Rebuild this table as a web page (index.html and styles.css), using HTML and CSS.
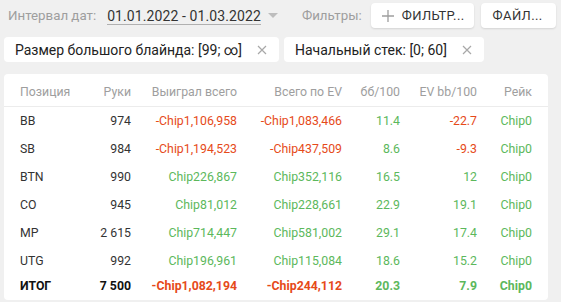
FILE: index.html
```html
<!DOCTYPE html>
<html lang="ru">
<head>
<meta charset="utf-8">
<link rel="stylesheet" href="styles.css">
</head>
<body>
<div class="page">
  <div class="topbar">
    <span class="label">Интервал дат:</span>
    <span class="date">01.01.2022 - 01.03.2022</span>
    <span class="caret"></span>
    <span class="label filters-label">Фильтры:</span>
    <button class="btn"><svg class="plus" width="14" height="14" viewBox="0 0 14 14"><path d="M7 1v12M1 7h12" stroke="#9e9e9e" stroke-width="1.3" fill="none"/></svg>ФИЛЬТР...</button>
    <button class="btn btn-file">ФАЙЛ...</button>
    <div class="edge"></div>
  </div>
  <div class="chips">
    <div class="chip">Размер большого блайнда: [99; ∞]<svg class="x" width="10" height="10" viewBox="0 0 10 10"><path d="M1 1l8 8M9 1l-8 8" stroke="#a8a8a8" stroke-width="1.2"/></svg></div>
    <div class="chip">Начальный стек: [0; 60]<svg class="x" width="10" height="10" viewBox="0 0 10 10"><path d="M1 1l8 8M9 1l-8 8" stroke="#a8a8a8" stroke-width="1.2"/></svg></div>
  </div>
  <div class="card">
    <div class="row head">
      <div class="l">Позиция</div><div>Руки</div><div>Выиграл всего</div><div>Всего по EV</div><div>бб/100</div><div>EV bb/100</div><div>Рейк</div>
    </div>
    <div class="row">
      <div class="l">BB</div><div>974</div><div class="neg">-Chip1,106,958</div><div class="neg">-Chip1,083,466</div><div class="pos">11.4</div><div class="neg">-22.7</div><div class="pos">Chip0</div>
    </div>
    <div class="row">
      <div class="l">SB</div><div>984</div><div class="neg">-Chip1,194,523</div><div class="neg">-Chip437,509</div><div class="pos">8.6</div><div class="neg">-9.3</div><div class="pos">Chip0</div>
    </div>
    <div class="row">
      <div class="l">BTN</div><div>990</div><div class="pos">Chip226,867</div><div class="pos">Chip352,116</div><div class="pos">16.5</div><div class="pos">12</div><div class="pos">Chip0</div>
    </div>
    <div class="row">
      <div class="l">CO</div><div>945</div><div class="pos">Chip81,012</div><div class="pos">Chip228,661</div><div class="pos">22.9</div><div class="pos">19.1</div><div class="pos">Chip0</div>
    </div>
    <div class="row">
      <div class="l">MP</div><div>2 615</div><div class="pos">Chip714,447</div><div class="pos">Chip581,002</div><div class="pos">29.1</div><div class="pos">17.4</div><div class="pos">Chip0</div>
    </div>
    <div class="row">
      <div class="l">UTG</div><div>992</div><div class="pos">Chip196,961</div><div class="pos">Chip115,084</div><div class="pos">18.6</div><div class="pos">15.2</div><div class="pos">Chip0</div>
    </div>
    <div class="row total">
      <div class="l">ИТОГ</div><div>7 500</div><div class="neg">-Chip1,082,194</div><div class="neg">-Chip244,112</div><div class="pos">20.3</div><div class="pos">7.9</div><div class="pos">Chip0</div>
    </div>
  </div>
</div>
</body>
</html>
```

FILE: styles.css
```css
html, body {
  margin: 0;
  padding: 0;
  background: #f0f0f0;
  overflow: hidden;
}
body {
  font-family: Roboto, "Noto Sans", sans-serif;
  color: #333;
}
.page {
  padding: 3px 0 0 4px;
  width: 561px;
  box-sizing: border-box;
}
.topbar {
  display: flex;
  align-items: center;
  height: 25px;
  font-size: 14px;
  white-space: nowrap;
}
.label {
  color: #9e9e9e;
  margin-left: 4px;
  font-size: 13.3px;
}
.date {
  margin-left: 11px;
  color: #333;
  border-bottom: 1px solid #b0b0b0;
  line-height: 16px;
  padding-top: 2px;
  letter-spacing: 0.1px;
}
.caret {
  margin-left: 7px;
  width: 0;
  height: 0;
  border-left: 5px solid transparent;
  border-right: 5px solid transparent;
  border-top: 5px solid #bdbdbd;
}
.filters-label {
  margin-left: 24px;
}
.btn {
  font-family: Roboto, "Noto Sans", sans-serif;
  font-size: 13px;
  font-weight: 400;
  color: #333;
  background: #fff;
  border: none;
  border-radius: 4px;
  box-shadow: 0 1px 2px rgba(0,0,0,0.12);
  height: 25px;
  padding: 0 9px 0 10px;
  display: flex;
  align-items: center;
  margin-left: 9px;
  letter-spacing: 0.4px;
}
.plus {
  margin-right: 7px;
}
.btn-file {
  margin-left: 7px;
  padding: 0 13px 0 12px;
}
.edge {
  flex: none;
  margin-left: 7px;
  width: 12px;
  height: 21px;
  background: linear-gradient(#9e9e9e 0 62%, #5cb85c 62% 100%);
}
.chips {
  display: flex;
  gap: 5px;
  margin-top: 9px;
}
.chip {
  background: #fff;
  border-radius: 4px;
  height: 25px;
  font-size: 14px;
  display: flex;
  align-items: center;
  padding: 0 12px 0 11px;
  color: #222;
}
.x {
  margin-left: 15px;
}
.card {
  margin-top: 12px;
  width: 544px;
  background: #fff;
  border-radius: 4px;
  padding: 0 16px 3px;
  box-sizing: border-box;
}
.row {
  display: grid;
  grid-template-columns: 51px 60px 106px 105px 58px 77px 55px;
  align-items: center;
  height: 28px;
  font-size: 12.3px;
  text-align: right;
}
.row .l {
  text-align: left;
}
.row.head {
  height: 33px;
  padding-top: 3px;
  box-sizing: border-box;
  color: #9e9e9e;
  border-bottom: 1px solid #ececec;
  margin: 0 -16px;
  padding-left: 16px;
  padding-right: 16px;
}
.row.total {
  height: 22px;
  font-weight: 700;
  color: #111;
}
.neg { color: #e64a19; }
.pos { color: #5cb85c; }
```
